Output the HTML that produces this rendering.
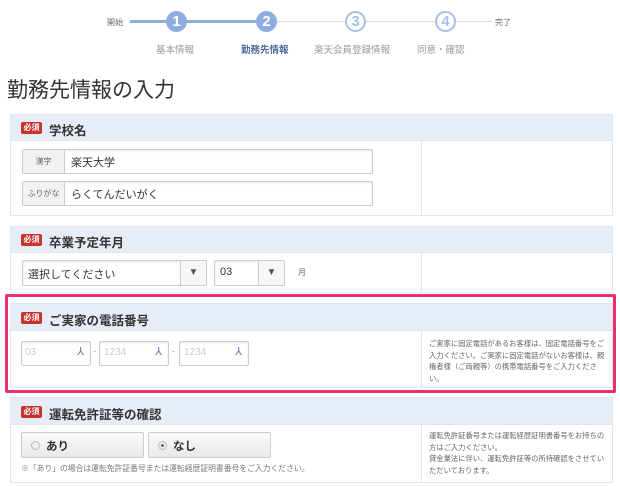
<!DOCTYPE html>
<html><head><meta charset="utf-8"><style>
*{margin:0;padding:0;box-sizing:border-box}
body{width:620px;height:486px;background:#fff;position:relative;overflow:hidden;font-family:"Liberation Sans","Noto Sans CJK JP",sans-serif;color:#333}
.a{position:absolute}
.sec{position:absolute;left:10px;width:603px;border:1px solid #e3e6ea;background:#fff}
.hd{position:absolute;left:0;right:0;top:0;background:#e6edf7;border-bottom:1px solid #dfe4ea}
.req{position:absolute;left:10px;background:#c8332e;color:#fff;font-size:8px;line-height:12px;width:21px;text-align:center;border-radius:2px;font-weight:bold}
.ht{position:absolute;left:38px;font-size:12.5px;font-weight:bold;color:#333}
.div{position:absolute;left:410px;width:1px;background:#e6e6e6}
.in{position:absolute;border:1px solid #ccc;border-radius:2px;background:#fff;box-shadow:inset 0 1px 2px rgba(0,0,0,.1)}
.lab{position:absolute;left:0;top:0;bottom:0;background:#f2f2f2;border-right:1px solid #ccc;font-size:8px;color:#666;text-align:center}
.note{position:absolute;left:418px;font-size:7.3px;line-height:11.5px;color:#666;width:180px}
.c{position:absolute;top:11px;width:21px;height:21px;border-radius:50%;font-size:15px;font-weight:bold;text-align:center;line-height:21px}
.sl{position:absolute;top:42px;font-size:9.5px;color:#999}
</style></head><body>
<div class="a" style="left:130px;top:20px;width:137px;height:3px;background:#8eaee0"></div>
<div class="a" style="left:267px;top:21px;width:225px;height:1px;background:#ddd"></div>
<div class="a" style="left:107px;top:17px;font-size:8px;color:#666">開始</div>
<div class="a" style="left:495px;top:17px;font-size:8px;color:#666">完了</div>
<div class="c" style="left:166px;background:#8eaee0;color:#fff">1</div>
<div class="c" style="left:256px;background:#8eaee0;color:#fff">2</div>
<div class="c" style="left:345px;background:#fff;border:2px solid #a8c0e6;color:#a8c0e6;line-height:17px">3</div>
<div class="c" style="left:435px;background:#fff;border:2px solid #a8c0e6;color:#a8c0e6;line-height:17px">4</div>
<div class="sl" style="left:156px">基本情報</div>
<div class="sl" style="left:241px;color:#4f6b99;font-weight:bold">勤務先情報</div>
<div class="sl" style="left:314px">楽天会員登録情報</div>
<div class="sl" style="left:417px">同意・確認</div>
<div class="a" style="left:7px;top:74px;font-size:21px;color:#333">勤務先情報の入力</div>

<div class="sec" style="top:114px;height:102px">
 <div class="hd" style="height:26px"><div class="req" style="top:7px">必須</div><div class="ht" style="top:5px">学校名</div></div>
 <div class="div" style="top:26px;bottom:0"></div>
 <div class="in" style="left:11px;top:34px;width:351px;height:25px"><div class="lab" style="width:42px;line-height:23px">漢字</div><div class="a" style="left:48px;top:4px;font-size:11px">楽天大学</div></div>
 <div class="in" style="left:11px;top:66px;width:351px;height:25px"><div class="lab" style="width:42px;line-height:23px">ふりがな</div><div class="a" style="left:48px;top:4px;font-size:11px">らくてんだいがく</div></div>
</div>

<div class="sec" style="top:226px;height:67px">
 <div class="hd" style="height:26px"><div class="req" style="top:7px">必須</div><div class="ht" style="top:5px">卒業予定年月</div></div>
 <div class="div" style="top:26px;bottom:0"></div>
 <div class="in" style="left:11px;top:33px;width:185px;height:26px"><div class="a" style="left:5px;top:5px;font-size:11px">選択してください</div><div class="a" style="right:0;top:0;bottom:0;width:26px;border-left:1px solid #ccc;background:#f7f7f7;color:#555;font-size:10px;text-align:center;line-height:24px">▼</div></div>
 <div class="in" style="left:203px;top:33px;width:71px;height:26px"><div class="a" style="left:5px;top:5px;font-size:11px">03</div><div class="a" style="right:0;top:0;bottom:0;width:26px;border-left:1px solid #ccc;background:#f7f7f7;color:#555;font-size:10px;text-align:center;line-height:24px">▼</div></div>
 <div class="a" style="left:287px;top:40px;font-size:8px;color:#666">月</div>
</div>

<div class="sec" style="top:303px;height:85px">
 <div class="hd" style="height:27px"><div class="req" style="top:8px">必須</div><div class="ht" style="top:6px">ご実家の電話番号</div></div>
 <div class="div" style="top:27px;bottom:0"></div>
 <div class="in" style="left:10px;top:37px;width:70px;height:25px"><div class="a" style="left:3px;top:5px;font-size:10px;color:#ccc">03</div><div class="a" style="right:6px;top:3px;font-size:11px;color:#5a7fb8">⅄</div></div>
 <div class="a" style="left:82px;top:42px;font-size:9px;color:#999">-</div>
 <div class="in" style="left:88px;top:37px;width:70px;height:25px"><div class="a" style="left:4px;top:5px;font-size:10px;color:#ccc">1234</div><div class="a" style="right:6px;top:3px;font-size:11px;color:#5a7fb8">⅄</div></div>
 <div class="a" style="left:161px;top:42px;font-size:9px;color:#999">-</div>
 <div class="in" style="left:168px;top:37px;width:70px;height:25px"><div class="a" style="left:4px;top:5px;font-size:10px;color:#ccc">1234</div><div class="a" style="right:6px;top:3px;font-size:11px;color:#5a7fb8">⅄</div></div>
 <div class="note" style="top:34px">ご実家に固定電話があるお客様は、固定電話番号をご入力ください。ご実家に固定電話がないお客様は、親権者様（ご両親等）の携帯電話番号をご入力ください。</div>
</div>
<div class="a" style="left:5px;top:294px;width:611px;height:99px;border:3px solid #e8306c;border-radius:2px"></div>

<div class="sec" style="top:397px;height:86px">
 <div class="hd" style="height:27px"><div class="req" style="top:8px">必須</div><div class="ht" style="top:6px">運転免許証等の確認</div></div>
 <div class="div" style="top:27px;bottom:0"></div>
 <div class="a" style="left:10px;top:34px;width:123px;height:26px;border:1px solid #ccc;border-radius:2px;background:linear-gradient(#fafafa,#e9e9e9)"><div class="a" style="left:9px;top:8px;width:9px;height:9px;border-radius:50%;border:1px solid #bbb;background:#eee"></div><div class="a" style="left:24px;top:5px;font-size:11.5px;font-weight:bold">あり</div></div>
 <div class="a" style="left:137px;top:34px;width:123px;height:26px;border:1px solid #ccc;border-radius:2px;background:linear-gradient(#fafafa,#e9e9e9)"><div class="a" style="left:9px;top:8px;width:9px;height:9px;border-radius:50%;border:1px solid #bbb;background:radial-gradient(#666 25%,#eee 35%)"></div><div class="a" style="left:24px;top:5px;font-size:11.5px;font-weight:bold">なし</div></div>
 <div class="a" style="left:10px;top:65px;font-size:7.8px;color:#777">※「あり」の場合は運転免許証番号または運転経歴証明書番号をご入力ください。</div>
 <div class="note" style="top:32px">運転免許証番号または運転経歴証明書番号をお持ちの方はご入力ください。<br>貸金業法に伴い、運転免許証等の所持確認をさせていただいております。</div>
</div>
</body></html>
